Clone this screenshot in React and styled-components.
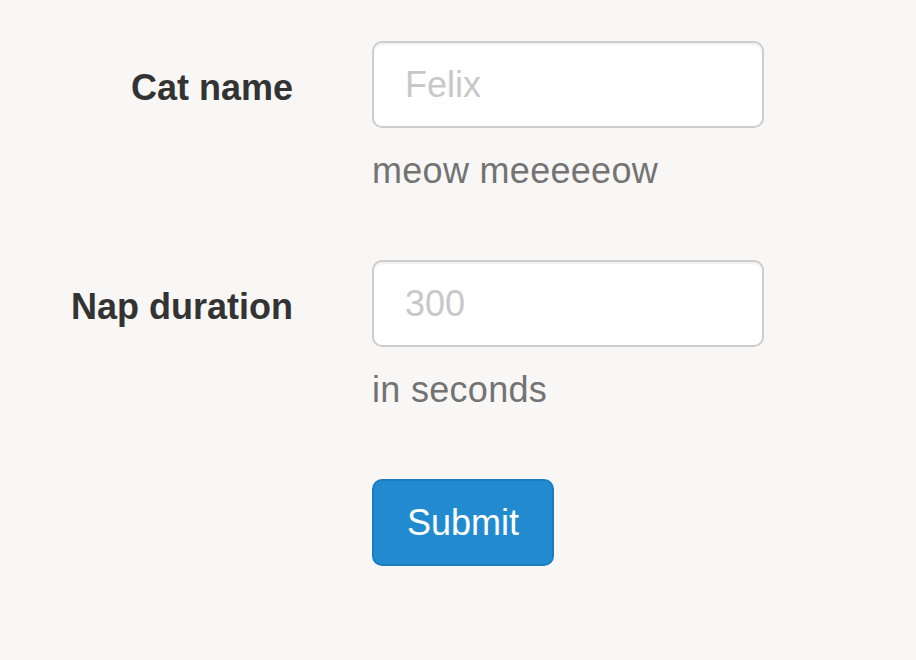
import styled, { createGlobalStyle } from "styled-components";

const GlobalStyle = createGlobalStyle`
  html, body {
    margin: 0;
    background: #f8f7f5;
    font-family: "Liberation Sans", Arial, sans-serif;
  }
`;

const Form = styled.form`
  padding-top: 41px;
`;

const Group = styled.div`
  display: grid;
  grid-template-columns: 293px 392px;
  column-gap: 79px;
  margin-bottom: 42px;
`;

const Label = styled.label`
  font-size: 36px;
  font-weight: bold;
  color: #333;
  text-align: right;
  line-height: 51px;
  padding-top: 21px;
`;

const Field = styled.div`
  display: flex;
  flex-direction: column;
`;

const Input = styled.input`
  box-sizing: border-box;
  width: 100%;
  height: 87px;
  padding: 0 31px;
  font-size: 36px;
  font-family: inherit;
  color: #555;
  background: #fff;
  border: 2px solid #cdcdcd;
  border-radius: 10px;
  box-shadow: inset 0 2px 2px rgba(0, 0, 0, 0.06);
  outline: none;

  &::placeholder {
    color: #c8c8c8;
  }
`;

const Help = styled.span`
  margin-top: 17px;
  margin-bottom: 22px;
  font-size: 36px;
  letter-spacing: 0.3px;
  line-height: 51px;
  color: #737373;
`;

const Button = styled.button`
  box-sizing: border-box;
  height: 87px;
  padding: 0 33px;
  font-size: 36px;
  font-family: inherit;
  color: #fff;
  background: #228bd0;
  border: 2px solid #1c7bbf;
  border-radius: 10px;
  cursor: pointer;
`;

const Actions = styled.div`
  display: grid;
  grid-template-columns: 293px auto;
  column-gap: 79px;
  justify-items: start;
`;

const App = () => {
  return (
    <>
      <GlobalStyle />
      <Form onSubmit={(e) => e.preventDefault()}>
        <Group>
          <Label htmlFor="cat">Cat name</Label>
          <Field>
            <Input id="cat" placeholder="Felix" />
            <Help>meow meeeeeow</Help>
          </Field>
        </Group>
        <Group>
          <Label htmlFor="nap">Nap duration</Label>
          <Field>
            <Input id="nap" placeholder="300" />
            <Help>in seconds</Help>
          </Field>
        </Group>
        <Actions>
          <span />
          <Button type="submit">Submit</Button>
        </Actions>
      </Form>
    </>
  );
};

export default App;
